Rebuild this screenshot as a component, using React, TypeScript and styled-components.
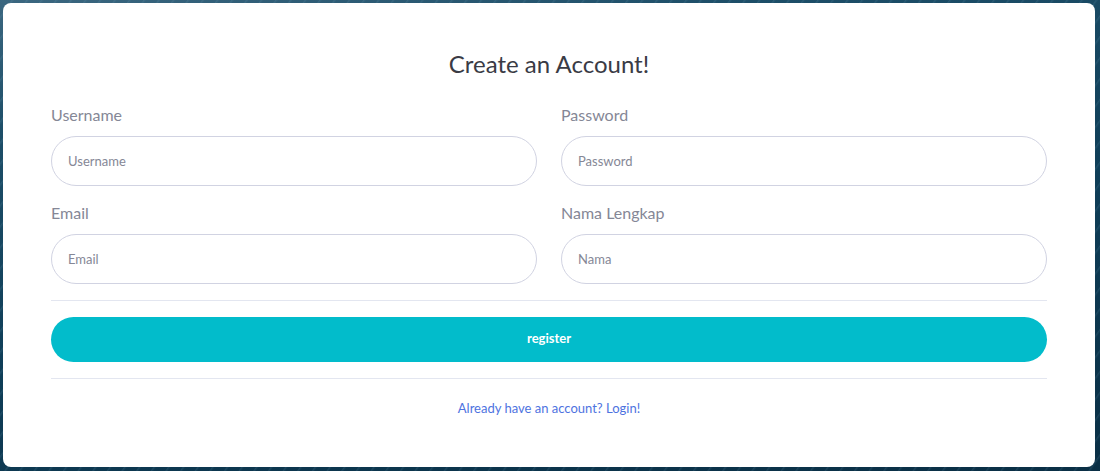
import React from "react";
import styled, { createGlobalStyle } from "styled-components";

const Global = createGlobalStyle`
  html, body { margin: 0; padding: 0; }
  body {
    font-family: Lato, "Open Sans", sans-serif;
    width: 1100px;
    height: 471px;
    overflow: hidden;
    background:
      repeating-linear-gradient(125deg, rgba(255,255,255,0) 0px, rgba(255,255,255,0) 9px, rgba(140,190,215,0.12) 10px, rgba(255,255,255,0) 12px),
      linear-gradient(170deg, #3b6780 0%, #1d4e68 20%, #0f3e58 55%, #0a2f45 100%);
  }
  * { box-sizing: border-box; }
`;

const Page = styled.div`
  padding: 3px 5px 4px 3px;
  height: 471px;
`;

const Card = styled.div`
  background: #fff;
  border-radius: 8px;
  height: 464px;
  padding: 46px 48px 0 48px;
  display: flex;
  flex-direction: column;
`;

const Title = styled.h1`
  margin: 0 0 25px;
  font-size: 24px;
  line-height: 29px;
  font-weight: 400;
  color: #3a3b45;
  text-align: center;
`;

const Grid = styled.div`
  display: grid;
  grid-template-columns: 1fr 1fr;
  column-gap: 24px;
  row-gap: 15px;
`;

const Group = styled.div`
  display: flex;
  flex-direction: column;
`;

const Label = styled.label`
  font-size: 16px;
  line-height: 24px;
  color: #858796;
  margin-bottom: 9px;
`;

const Input = styled.input`
  height: 50px;
  border: 1px solid #d1d3e2;
  border-radius: 25px;
  padding: 0 16px;
  font-family: inherit;
  font-size: 13px;
  color: #6e707e;
  outline: none;
  &::placeholder { color: #858796; }
`;

const Divider = styled.hr`
  border: 0;
  border-top: 1px solid #e3e6f0;
  margin: 16px 0;
  height: 0;
`;

const Button = styled.button`
  height: 45px;
  border: 0;
  border-radius: 23px;
  background: #02bccb;
  color: #fff;
  font-family: inherit;
  font-size: 13px;
  font-weight: 700;
  padding: 0 0 3px;
  cursor: pointer;
`;

const Footer = styled.div`
  text-align: center;
  margin-top: 2px;
`;

const LinkText = styled.a`
  font-size: 13px;
  line-height: 20px;
  color: #4e73df;
  text-decoration: none;
`;

export default function App() {
  const fields = [
    { label: "Username", placeholder: "Username", type: "text" },
    { label: "Password", placeholder: "Password", type: "password" },
    { label: "Email", placeholder: "Email", type: "email" },
    { label: "Nama Lengkap", placeholder: "Nama", type: "text" },
  ];
  return (
    <>
      <Global />
      <Page>
        <Card>
          <Title>Create an Account!</Title>
          <Grid>
            {fields.map((f) => (
              <Group key={f.label}>
                <Label>{f.label}</Label>
                <Input type={f.type} placeholder={f.placeholder} />
              </Group>
            ))}
          </Grid>
          <Divider />
          <Button>register</Button>
          <Divider />
          <Footer>
            <LinkText href="#">Already have an account? Login!</LinkText>
          </Footer>
        </Card>
      </Page>
    </>
  );
}
